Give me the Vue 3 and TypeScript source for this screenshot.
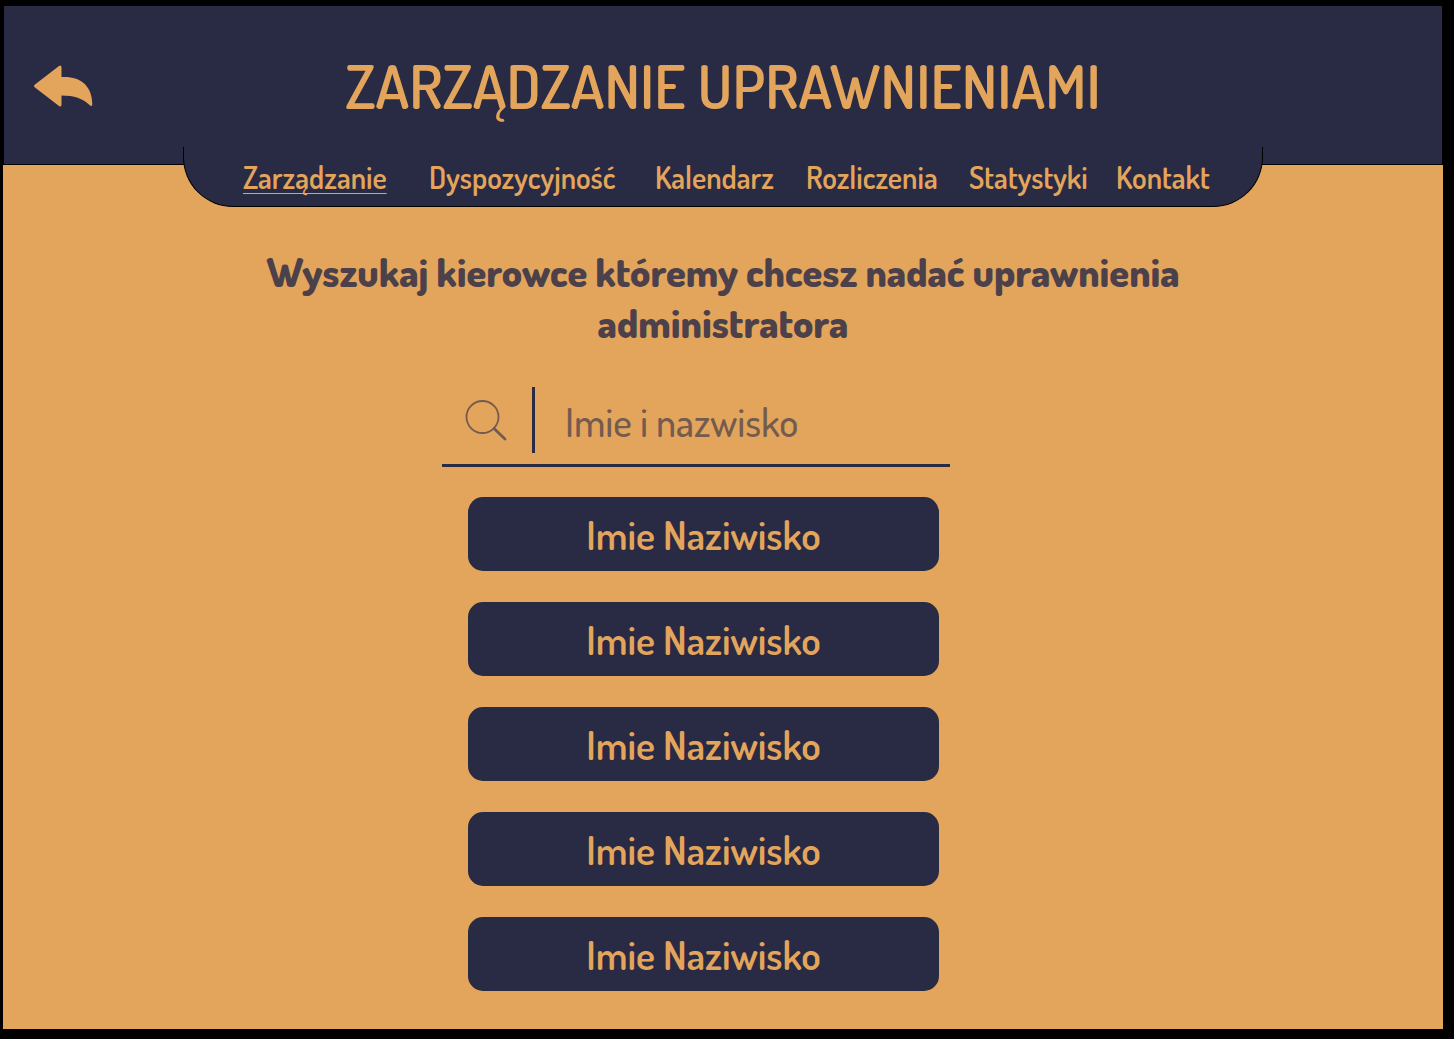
<script setup lang="ts">
import { ref } from 'vue'

interface NavItem {
  label: string
  active?: boolean
}

const navItems: NavItem[] = [
  { label: 'Zarządzanie', active: true },
  { label: 'Dyspozycyjność' },
  { label: 'Kalendarz' },
  { label: 'Rozliczenia' },
  { label: 'Statystyki' },
  { label: 'Kontakt' },
]

const query = ref('')
const drivers = ref<string[]>(Array.from({ length: 5 }, () => 'Imie Naziwisko'))
</script>

<template>
  <div class="page">
    <header class="header">
      <button class="back" type="button" aria-label="Wstecz">
        <svg viewBox="0 0 60 44" width="60" height="44" aria-hidden="true">
          <path
            d="M1 21.500 L25 3 Q27.500 1.500 27.500 4.500 V14 C47 13 58 23 58.300 41 Q58.300 44.500 55.500 42 C49 35.500 40 32.500 27.500 32.500 V41.500 Q27.500 44.500 25 43 L1 24.500 Q-1 23 1 21.500 Z"
            fill="currentColor"
          />
        </svg>
      </button>
      <h1 class="title">ZARZĄDZANIE UPRAWNIENIAMI</h1>
    </header>

    <nav class="nav" aria-label="Menu">
      <a
        v-for="item in navItems"
        :key="item.label"
        href="#"
        class="nav-link"
        :class="{ active: item.active }"
      >{{ item.label }}</a>
    </nav>

    <main class="main">
      <h2 class="prompt">Wyszukaj kierowce któremy chcesz nadać uprawnienia administratora</h2>

      <div class="finder">
        <div class="search">
          <label class="search-icon" for="driver-search" aria-label="Imie i nazwisko">
            <svg viewBox="0 0 44 44" width="44" height="44" fill="none" stroke="currentColor" aria-hidden="true">
              <circle cx="18.500" cy="19" r="16" stroke-width="1.800" />
              <path d="M30 30.500 L41 41" stroke-width="2.800" stroke-linecap="round" />
            </svg>
          </label>
          <input id="driver-search" v-model="query" class="search-input" type="text" placeholder="Imie i nazwisko" />
        </div>

        <ul class="list">
          <li v-for="(driver, i) in drivers" :key="i">
            <button class="driver" type="button">{{ driver }}</button>
          </li>
        </ul>
      </div>
    </main>
  </div>
</template>

<style>
body {
  margin: 0;
  background: #000;
}
</style>

<style scoped>
.page {
  box-sizing: border-box;
  margin: 6px 11px 10px 3px;
  padding-bottom: 38px;
  background: #e3a55c;
  color: #e3a55c;
  font-family: Dosis, "Liberation Sans Narrow", "Lato", sans-serif;
}

.header {
  display: grid;
  grid-template-columns: 60px 1fr 60px;
  align-items: center;
  box-sizing: border-box;
  height: 159px;
  padding: 0 30px;
  border: solid #000;
  border-width: 0 1px 1px;
  background: #292a44;
}

.back {
  display: block;
  padding: 0;
  border: 0;
  background: none;
  color: inherit;
  cursor: pointer;
}

.back svg {
  display: block;
}

.title {
  margin: 0;
  font-size: 60px;
  font-weight: 600;
  line-height: 76px;
  text-align: center;
  white-space: nowrap;
}

.nav {
  position: relative;
  display: grid;
  grid-template-columns: 186fr 226fr 151fr 163fr 147fr 94fr;
  align-items: center;
  box-sizing: border-box;
  width: 75%;
  height: 60px;
  margin: -18px auto 0;
  padding: 0 52px 0 59px;
  border: 1px solid #000;
  border-top: 0;
  border-radius: 0 0 50px 50px;
  background: #292a44;
}

.nav-link {
  color: inherit;
  font-size: 30px;
  font-weight: 600;
  line-height: 38px;
  text-decoration: none;
  white-space: nowrap;
}

.nav-link.active {
  text-decoration: underline 1px;
  text-decoration-skip-ink: none;
  text-underline-offset: 4px;
}

.main {
  display: flex;
  flex-direction: column;
  align-items: center;
  padding-top: 39px;
}

.prompt {
  max-width: 960px;
  margin: 0;
  color: #4c414a;
  font-size: 40px;
  font-weight: 800;
  line-height: 51px;
  text-align: center;
}

.finder {
  width: 508px;
  margin: 39px 54px 0 0;
}

.search {
  display: flex;
  align-items: flex-start;
  height: 77px;
  border-bottom: 3px solid #292a44;
  color: #735b50;
}

.search-icon {
  display: flex;
  align-items: center;
  box-sizing: border-box;
  width: 93px;
  height: 66px;
  padding-left: 22px;
  border-right: 3px solid #292a44;
}

.search-input {
  flex: 1;
  min-width: 0;
  height: 66px;
  padding: 1px 0 0 30px;
  box-sizing: border-box;
  border: 0;
  outline: 0;
  background: none;
  color: inherit;
  font: 500 40px/50px Dosis, "Liberation Sans Narrow", "Lato", sans-serif;
}

.search-input::placeholder {
  color: inherit;
  opacity: 1;
}

.list {
  display: grid;
  gap: 31px;
  margin: 0;
  padding: 30px 11px 0 26px;
  list-style: none;
}

.driver {
  display: block;
  width: 100%;
  height: 74px;
  padding: 0;
  border: 0;
  border-radius: 15px;
  background: #292a44;
  color: inherit;
  font: 600 40px/50px Dosis, "Liberation Sans Narrow", "Lato", sans-serif;
  cursor: pointer;
}
</style>
